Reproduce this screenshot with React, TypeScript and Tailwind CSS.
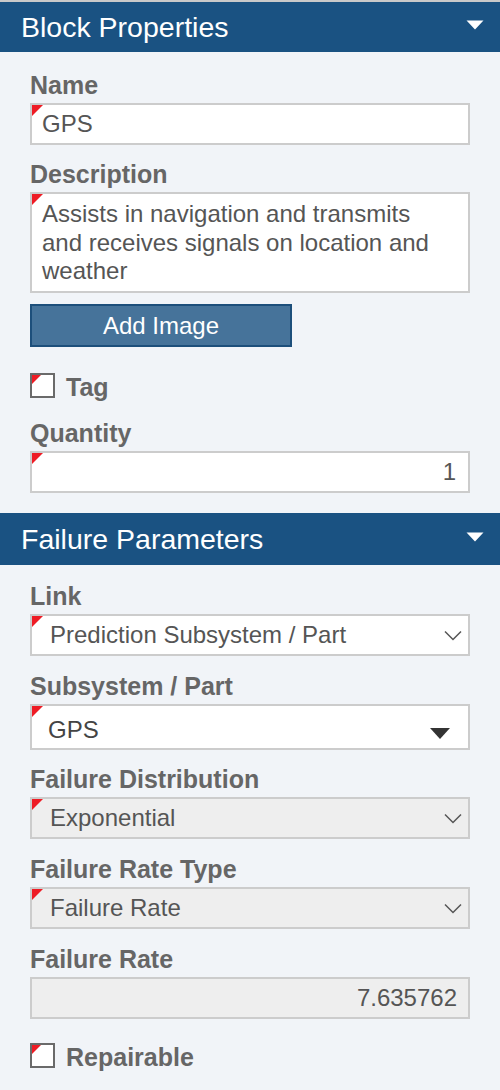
import React from "react";

const font = { fontFamily: '"Liberation Sans", Arial, sans-serif' };

function RedCorner({ size = 11 }: { size?: number }) {
  return (
    <div
      className="absolute left-0 top-0 bg-[#ee1c25] [clip-path:polygon(0_0,100%_0,0_100%)]"
      style={{ width: size, height: size }}
    />
  );
}

function Caret() {
  return (
    <svg width="18" height="10" viewBox="0 0 18 10" className="mt-[-4px]">
      <path d="M0.5 0.5 L17.5 0.5 L9 9.5 Z" fill="#ffffff" />
    </svg>
  );
}

function Chevron() {
  return (
    <svg width="18" height="11" viewBox="0 0 18 11">
      <path d="M1 1.5 L9 9.5 L17 1.5" fill="none" stroke="#555" strokeWidth="1.5" />
    </svg>
  );
}

function Header({ title, h }: { title: string; h: string }) {
  return (
    <div className={`flex items-center justify-between bg-[#1a5282] pl-[21px] pr-[16px] ${h}`}>
      <span className="text-[28.5px] leading-[32px] text-white">{title}</span>
      <Caret />
    </div>
  );
}

function Label({ children }: { children: React.ReactNode }) {
  return (
    <div className="mb-[2px] text-[25px] font-bold leading-[31px] text-[#666666]">{children}</div>
  );
}

function Checkbox({ label }: { label: string }) {
  return (
    <div className="flex h-[25px] items-start gap-[11px]">
      <div className="relative h-[25px] w-[25px] border-2 border-[#6a6a6a] bg-white">
        <RedCorner size={9} />
      </div>
      <span className="mt-[4px] text-[25px] font-bold leading-[21px] text-[#666666]">{label}</span>
    </div>
  );
}

export default function App() {
  return (
    <div className="min-h-[1090px] w-[500px] bg-[#f1f4f8]" style={font}>
      <div className="h-[2px] bg-[#c9c9c9]" />
      <Header title="Block Properties" h="h-[50px]" />

      <div className="flex flex-col px-[30px] pb-[20px] pt-[18px]">
        <div>
          <Label>Name</Label>
          <div className="relative flex h-[42px] items-center border-2 border-[#cccccc] bg-white pl-[10px] text-[24px] text-[#555555]">
            <RedCorner />
            GPS
          </div>
        </div>

        <div className="mt-[14px]">
          <Label>Description</Label>
          <div className="relative h-[101px] border-2 border-[#cccccc] bg-white pl-[10px] pr-[20px] pt-[6px] text-[24px] leading-[28.5px] text-[#555555]">
            <RedCorner />
            Assists in navigation and transmits
            <br />
            and receives signals on location and
            <br />
            weather
          </div>
        </div>

        <button className="mt-[11px] flex h-[43px] w-[262px] items-center justify-center border-2 border-[#1d4f7b] bg-[#46739a] text-[24px] text-white">
          Add Image
        </button>

        <div className="mt-[26px]">
          <Checkbox label="Tag" />
        </div>

        <div className="mt-[20px]">
          <Label>Quantity</Label>
          <div className="relative flex h-[42px] items-center justify-end border-2 border-[#cccccc] bg-white pr-[12px] text-[24px] text-[#555555]">
            <RedCorner />
            1
          </div>
        </div>
      </div>

      <Header title="Failure Parameters" h="h-[52px]" />

      <div className="flex flex-col px-[30px] pb-[20px] pt-[16px]">
        <div>
          <Label>Link</Label>
          <div className="relative flex h-[42px] items-center justify-between border-2 border-[#cccccc] bg-white pl-[18px] pr-[6px] text-[24px] text-[#555555]">
            <RedCorner />
            <span>Prediction Subsystem / Part</span>
            <Chevron />
          </div>
        </div>

        <div className="mt-[15px]">
          <Label>Subsystem / Part</Label>
          <div className="relative flex h-[46px] items-center justify-between border-2 border-[#cccccc] bg-white pl-[16px] pr-[18px] pt-[6px] text-[24px] text-[#444444]">
            <RedCorner />
            <span>GPS</span>
            <svg width="20" height="11" viewBox="0 0 20 11" className="mt-[7px]">
              <path d="M0 0 L20 0 L10 11 Z" fill="#333333" />
            </svg>
          </div>
        </div>

        <div className="mt-[14px]">
          <Label>Failure Distribution</Label>
          <div className="relative flex h-[42px] items-center justify-between border-2 border-[#cccccc] bg-[#eeeeee] pl-[18px] pr-[6px] text-[24px] text-[#555555]">
            <RedCorner />
            <span>Exponential</span>
            <Chevron />
          </div>
        </div>

        <div className="mt-[15px]">
          <Label>Failure Rate Type</Label>
          <div className="relative flex h-[42px] items-center justify-between border-2 border-[#cccccc] bg-[#eeeeee] pl-[18px] pr-[6px] text-[24px] text-[#555555]">
            <RedCorner />
            <span>Failure Rate</span>
            <Chevron />
          </div>
        </div>

        <div className="mt-[15px]">
          <Label>Failure Rate</Label>
          <div className="flex h-[42px] items-center justify-end border-2 border-[#cccccc] bg-[#eeeeee] pr-[11px] text-[24px] text-[#555555]">
            7.635762
          </div>
        </div>

        <div className="mt-[24px]">
          <Checkbox label="Repairable" />
        </div>
      </div>
    </div>
  );
}
